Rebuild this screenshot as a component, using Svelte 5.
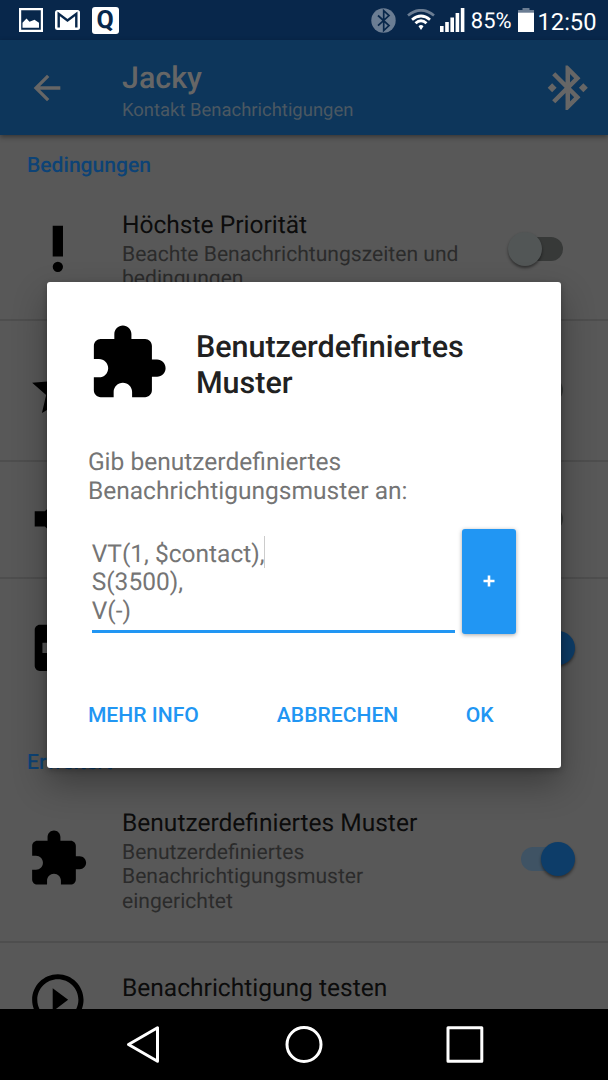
<script>
  const puzzle = 'M20.5 11H19V7c0-1.1-.9-2-2-2h-4V3.5C13 2.12 11.88 1 10.5 1S8 2.12 8 3.5V5H4c-1.1 0-1.99.9-1.99 2v3.8H3.5c1.49 0 2.7 1.21 2.7 2.7s-1.21 2.7-2.7 2.7H2V20c0 1.1.9 2 2 2h3.8v-1.5c0-1.49 1.21-2.7 2.7-2.7 1.49 0 2.7 1.21 2.7 2.7V22H17c1.1 0 2-.9 2-2v-4h1.5c1.38 0 2.5-1.12 2.5-2.5S21.88 11 20.5 11z';
  const conditions = [
    { icon: 'M10 3h4v12h-4zM12 17a2 2 0 1 0 0 4 2 2 0 0 0 0-4z', title: 'Höchste Priorität', lines: ['Beachte Benachrichtungszeiten und', 'bedingungen'], size: 'tall', on: false },
    { icon: 'M12 17.27L18.18 21l-1.64-7.03L22 9.24l-7.19-.61L12 2 9.19 8.63 2 9.24l5.46 4.73L5.82 21z', size: 'tall', on: false },
    { icon: 'M3 9v6h4l5 5V4L7 9H3zm13.5 3c0-1.77-1.02-3.29-2.5-4.03v8.05c1.48-.73 2.5-2.25 2.5-4.02z', size: 'short', on: false },
    { icon: 'M19 3H5c-1.1 0-1.99.9-1.99 2L3 19c0 1.1.9 2 2 2h14c1.1 0 2-.9 2-2V5c0-1.1-.9-2-2-2zm-1 11h-4v4h-4v-4H6v-4h4V6h4v4h4v4z', size: 'tall', on: true }
  ];
  const advanced = [
    { icon: puzzle, title: 'Benutzerdefiniertes Muster', lines: ['Benutzerdefiniertes', 'Benachrichtigungsmuster', 'eingerichtet'], size: 'taller', on: true },
    { icon: 'M10 16.5l6-4.5-6-4.5v9zM12 2C6.48 2 2 6.48 2 12s4.48 10 10 10 10-4.48 10-10S17.52 2 12 2zm0 18c-4.41 0-8-3.59-8-8s3.59-8 8-8 8 3.59 8 8-3.59 8-8 8z', title: 'Benachrichtigung testen', lines: ['\u00a0'], size: 'short' }
  ];
</script>

{#snippet row(item)}
  <div class="row {item.size}">
    <svg class="row-icon" viewBox="0 0 24 24"><path d={item.icon} /></svg>
    <div class="row-text">
      {#if item.title}
        <div class="row-title">{item.title}</div>
        {#each item.lines as line}<div class="row-sub">{line}</div>{/each}
      {/if}
    </div>
    {#if item.on !== undefined}
      <div class="switch" class:on={item.on}><span class="track"></span><span class="thumb"></span></div>
    {/if}
  </div>
{/snippet}

<div class="screen">
  <div class="status">
    <div class="status-group left">
      <svg width="24" height="24" viewBox="0 0 24 24"><path fill="#fff" fill-rule="evenodd" d="M0 0h24v24H0zM2.2 2.2v19.6h19.6V2.2z" /><path fill="#fff" d="M3.5 19.7v-5l4-4.2 3 3.2 5-2 4.5 3v5z" /></svg>
      <svg width="25" height="20" viewBox="0 0 25 20"><rect width="25" height="20" rx="2.5" fill="#fff" /><path d="M3.7 17.4V3.8l8.8 6.7 8.8-6.7v13.6" fill="none" stroke="#08274b" stroke-width="2.4" /></svg>
      <div class="q-badge">Q</div>
    </div>
    <div class="status-group right">
      <svg class="bt" width="25" height="25" viewBox="0 0 25 25"><circle cx="12.5" cy="12.5" r="12.2" fill="#6b7d93" /><path d="M7 7.5l11 10-5.3 5V2.6l5.3 5-11 10" fill="none" stroke="#08274b" stroke-width="1.7" /></svg>
      <svg class="wifi" width="28" height="22" viewBox="0 0 28 22"><path d="M1 6.5Q14-4 27 6.5" fill="none" stroke="#6b7d93" stroke-width="2.7" /><path d="M5 10.8Q14 3.2 23 10.8" fill="none" stroke="#fff" stroke-width="2.8" /><path d="M8.5 14.3Q14 9 19.5 14.3" fill="none" stroke="#fff" stroke-width="2.8" /><path d="M11.5 17.2Q14 14.6 16.5 17.2L14 21z" fill="#fff" /></svg>
      <svg class="signal" width="25" height="24" viewBox="0 0 25 24"><path fill="#fff" d="M0 18h3.6v6H0zM5.2 14h3.6v10H5.2zM10.4 9.5H14V24h-3.6zM15.6 5h3.6v19h-3.6zM20.8 0h3.6v24h-3.6z" /></svg>
      <span class="percent">85%</span>
      <svg class="battery" width="16" height="24" viewBox="0 0 16 24"><path fill="#6b7d93" d="M4.5 0h7v2H16v3H0V2h4.5z" /><path fill="#fff" d="M0 4.7h16V24H0z" /></svg>
      <span class="clock">12:50</span>
    </div>
  </div>

  <header>
    <svg class="back" viewBox="0 0 24 24"><path d="M20 11H7.83l5.59-5.59L12 4l-8 8 8 8 1.41-1.41L7.83 13H20v-2z" /></svg>
    <div class="heading">
      <div class="name">Jacky</div>
      <div class="kind">Kontakt Benachrichtigungen</div>
    </div>
    <svg class="connect" viewBox="0 0 24 24"><path d="M7 12l-2-2-2 2 2 2 2-2zm10.71-4.29L12 2h-1v7.59L6.41 5 5 6.41 10.59 12 5 17.59 6.41 19 11 14.41V22h1l5.71-5.71-4.3-4.29 4.3-4.29zM13 5.83l1.88 1.88L13 9.59V5.83zm1.88 10.46L13 18.17v-3.76l1.88 1.88zM19 10l-2 2 2 2 2-2-2-2z" /></svg>
  </header>

  <main>
    <section>
      <h2>Bedingungen</h2>
      {#each conditions as item}{@render row(item)}{/each}
    </section>
    <section class="advanced">
      <h2>Erweitert</h2>
      {#each advanced as item}{@render row(item)}{/each}
    </section>
  </main>

  <nav>
    <svg width="36" height="40" viewBox="0 0 36 40"><path d="M3.5 19.5L32.5 2.8v33.4z" /></svg>
    <svg width="38" height="40" viewBox="0 0 38 40"><circle cx="19" cy="19.5" r="17" /></svg>
    <svg width="38" height="40" viewBox="0 0 38 40"><rect x="2" y="2.7" width="33.8" height="33.6" /></svg>
  </nav>

  <div class="dialog">
    <div class="dialog-head">
      <svg viewBox="0 0 24 24"><path d={puzzle} /></svg>
      <div class="dialog-title">Benutzerdefiniertes<br />Muster</div>
    </div>
    <div class="message">Gib benutzerdefiniertes<br />Benachrichtigungsmuster an:</div>
    <div class="entry">
      <div class="field">VT(1, $contact),<span class="caret"></span><br />S(3500),<br />V(-)</div>
      <button class="add" aria-label="+"><svg width="12" height="12" viewBox="0 0 12 12"><path d="M6 .5v11M.5 6h11" /></svg></button>
    </div>
    <div class="actions">
      <button>MEHR INFO</button>
      <button class="cancel">ABBRECHEN</button>
      <button class="ok">OK</button>
    </div>
  </div>
</div>

<style>
  :global(body) { margin: 0; background: #000; }
  * { box-sizing: border-box; }
  .screen { position: relative; width: 608px; height: 1080px; overflow: hidden; display: flex; flex-direction: column; background: #585858; font-family: Roboto, sans-serif; text-rendering: geometricPrecision; }
  svg { display: block; flex: none; }

  .status { height: 40px; flex: none; display: flex; justify-content: space-between; background: #08274b; color: #fff; padding: 0 11.5px 0 18.7px; }
  .status-group { display: flex; align-items: center; }
  .left { gap: 12.5px; }
  .q-badge { width: 27px; height: 27px; margin-left: -1px; border-radius: 3px; background: #fff; color: #08274b; font: 700 25px/28px Roboto, sans-serif; text-align: center; }
  .wifi { margin-left: 10.5px; }
  .signal { margin-left: 5.5px; }
  .percent { font-size: 21.9px; margin-left: 5.5px; line-height: 40px; padding-top: 3px; }
  .battery { margin-left: 6.5px; }
  .clock { font-size: 23.7px; line-height: 40px; padding-top: 3px; margin-left: 3.5px; }

  header { position: relative; height: 95px; flex: none; display: flex; align-items: center; background: #0d365b; padding: 0 14px 0 27px; box-shadow: 0 2px 5px rgba(0, 0, 0, .4); }
  header svg { fill: #666; }
  .back { width: 40px; height: 40px; }
  .heading { flex: 1; margin-left: 55px; padding-top: 9px; }
  .name { font-size: 30.4px; line-height: 35px; font-weight: 500; color: #666; }
  .kind { font-size: 18.45px; line-height: 28px; color: #4b5862; }
  .connect { width: 53.5px; height: 53.5px; }

  main { flex: 1; min-height: 0; overflow: hidden; }
  .advanced { padding-top: 14px; }
  h2 { height: 44.5px; margin: 0; padding: 16.5px 27px 0; font-size: 21.1px; line-height: 27px; font-weight: 500; color: #0d4376; }
  .advanced h2 { height: 44px; padding-top: 15px; }
  .row { display: flex; align-items: center; padding: 0 32.7px 0 27px; border-bottom: 2px solid #4e4e4e; }
  .tall { height: 141px; }
  .short { height: 117px; }
  .taller { height: 165px; }
  .row:nth-child(5) { border-bottom-color: transparent; }
  .row-icon { width: 61.7px; height: 61.7px; }
  .row-text { flex: 1; margin-left: 33.3px; padding-top: .7px; white-space: nowrap; }
  .row-title { font-size: 24.55px; line-height: 36px; color: #0c0c0c; }
  .row-sub { font-size: 21.1px; line-height: 24.4px; color: #2b2b2b; }
  .switch { position: relative; width: 67.6px; height: 34px; flex: none; }
  .track { position: absolute; left: 13px; top: 5px; width: 42px; height: 24px; border-radius: 12px; background: #373938; }
  .thumb { position: absolute; left: 0; top: 0; width: 34px; height: 34px; border-radius: 50%; background: #525656; box-shadow: 0 2px 3px rgba(0, 0, 0, .45); }
  .on .track { background: #3f5364; }
  .on .thumb { left: 33.6px; background: #0d3d69; }

  nav { height: 71px; flex: none; display: flex; align-items: center; background: #000; padding-left: 125px; }
  nav svg { fill: none; stroke: #fff; stroke-width: 3; stroke-linejoin: round; }
  nav svg:nth-child(2) { margin-left: 124px; }
  nav svg:nth-child(3) { margin-left: 123px; }

  .dialog { position: absolute; left: 47.4px; top: 281.5px; width: 513.2px; height: 486.5px; display: flex; flex-direction: column; background: #fff; border-radius: 3px; padding: 40px 41px 0 40.5px; box-shadow: 0 16px 34px rgba(0, 0, 0, .32), 0 2px 6px rgba(0, 0, 0, .25); }
  .dialog-head { display: flex; align-items: center; height: 83px; }
  .dialog-head svg { width: 82px; height: 82px; margin-left: -.7px; }
  .dialog-title { margin: 5px 0 0 26.7px; font-size: 30.5px; line-height: 36px; font-weight: 500; color: #212121; white-space: nowrap; }
  .message { margin-top: 42px; font-size: 24.55px; line-height: 29px; color: #757575; white-space: nowrap; }
  .entry { display: flex; margin-top: 24px; margin-right: 3.5px; height: 105.5px; }
  .field { margin: 0 7.5px 1.5px 3.8px; flex: 1; padding-top: 11px; border-bottom: 3.5px solid #2196f3; font-size: 24.5px; line-height: 28.9px; color: #757575; white-space: nowrap; }
  .caret { display: inline-block; width: 1.5px; height: 32px; margin: -10px 0 -8px -1px; position: relative; top: -2px; vertical-align: middle; background: #ccc; }
  button { border: 0; padding: 0; background: none; font: 500 21.1px/30px Roboto, sans-serif; color: #2196f3; white-space: nowrap; }
  .add { width: 54px; display: flex; align-items: center; justify-content: center; border-radius: 3px; background: #2196f3; box-shadow: 0 1px 4px rgba(0, 0, 0, .35); }
  .add path { stroke: #fff; stroke-width: 2.6; }
  .actions { display: flex; margin-top: 65.5px; }
  .cancel { margin-left: 78px; }
  .ok { margin-left: 67.5px; }
</style>
